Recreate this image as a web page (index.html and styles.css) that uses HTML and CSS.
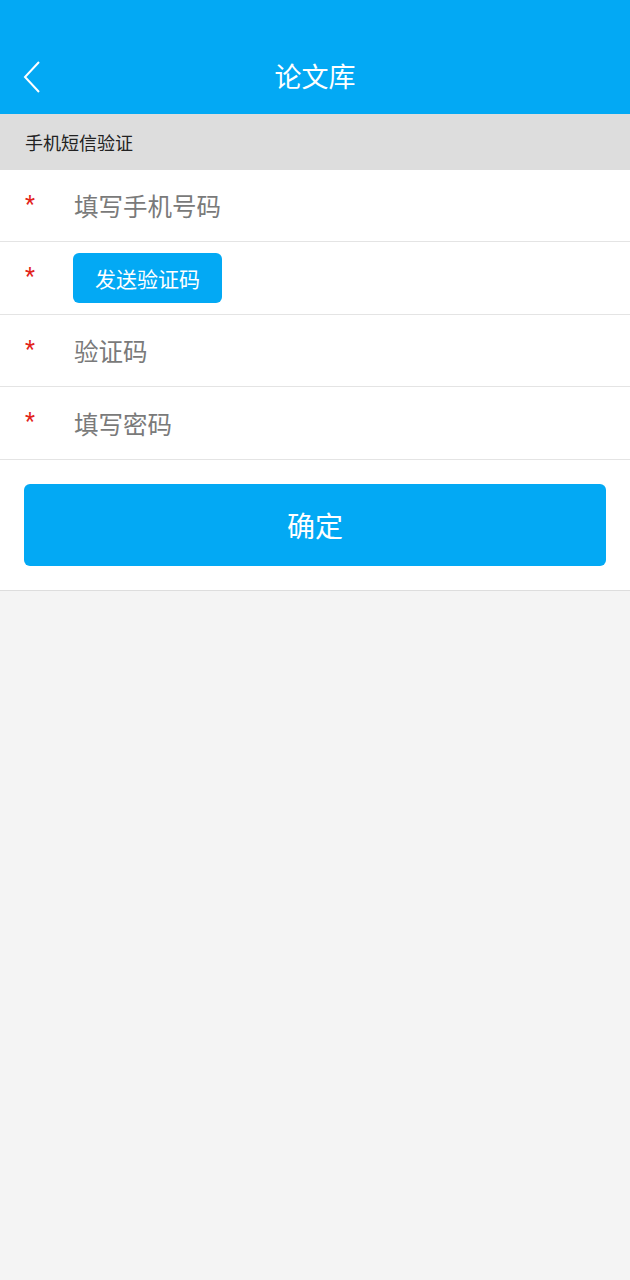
FILE: index.html
```html
<!DOCTYPE html>
<html lang="zh">
<head>
  <meta name="viewport" content="width=device-width">
  <title>论文库</title>
  <link rel="stylesheet" href="styles.css">
</head>
<body>
  <div class="topbar">
    <a class="back" href="#">
      <svg width="20" height="32" viewBox="0 0 20 32"><path d="M17 1 L3 16 L17 31" fill="none" stroke="#fff" stroke-width="2"/></svg>
    </a>
    <h1 class="title">论文库</h1>
  </div>
  <div class="section_label">手机短信验证</div>
  <form class="form">
    <div class="row">
      <span class="req">*</span>
      <input type="tel" placeholder="填写手机号码">
    </div>
    <div class="row tall">
      <span class="req">*</span>
      <button type="button" class="send_btn">发送验证码</button>
    </div>
    <div class="row">
      <span class="req">*</span>
      <input type="text" placeholder="验证码">
    </div>
    <div class="row tall">
      <span class="req">*</span>
      <input type="password" placeholder="填写密码">
    </div>
    <div class="submit_wrap">
      <button class="submit_btn">确定</button>
    </div>
  </form>
</body>
</html>
```

FILE: styles.css
```css
*, *:before, *:after {
  box-sizing: border-box;
}
html, body {
  height: 100%;
}
body {
  margin: 0;
  padding: 0;
  background: #f4f4f4;
  font-family: "Noto Sans CJK SC", "Noto Sans", sans-serif;
}

.topbar {
  height: 114px;
  background: #03a9f4;
  display: flex;
  align-items: flex-end;
  justify-content: center;
  padding-bottom: 18px;
  position: relative;
}
.back {
  position: absolute;
  left: 22px;
  top: 61px;
  display: block;
  line-height: 0;
}
.title {
  margin: 0;
  color: #fff;
  font-size: 27px;
  font-weight: normal;
  line-height: 40px;
}

.section_label {
  height: 56px;
  background: #dddddd;
  color: #222;
  font-size: 18px;
  padding-left: 25px;
  display: flex;
  align-items: center;
}

.form {
  background: #fff;
  border-bottom: 1px solid #dddddd;
}
.row {
  height: 72px;
  border-bottom: 1px solid #e4e4e4;
  display: flex;
  align-items: center;
}
.row.tall {
  height: 73px;
}
.req {
  width: 74px;
  padding-left: 25px;
  color: #e2231a;
  font-family: Roboto, sans-serif;
  font-size: 23px;
  line-height: 24px;
  margin-top: -2px;
}
.row input {
  flex: 1;
  border: none;
  outline: none;
  padding: 0;
  font-family: inherit;
  font-size: 24.5px;
  color: #333;
  background: transparent;
}
.row input::placeholder {
  color: #7a7a7a;
}
.send_btn {
  width: 149px;
  height: 50px;
  border: none;
  border-radius: 6px;
  background: #03a9f4;
  color: #fff;
  font-family: inherit;
  font-size: 21px;
  padding: 0;
  margin-left: -1px;
}

.submit_wrap {
  padding: 24px 24px;
}
.submit_btn {
  display: block;
  width: 100%;
  height: 82px;
  border: none;
  border-radius: 6px;
  background: #03a9f4;
  color: #fff;
  font-family: inherit;
  font-size: 28px;
  padding: 0;
}
```
